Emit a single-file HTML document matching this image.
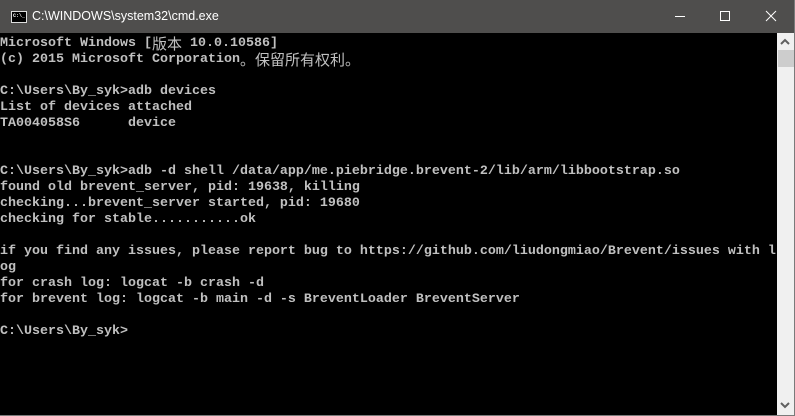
<!DOCTYPE html>
<html><head><meta charset="utf-8"><style>
html,body{margin:0;padding:0;background:#000;width:795px;height:416px;overflow:hidden}
.title{position:absolute;left:0;top:0;width:795px;height:33px;background:#4f4e4d}
.title .t{position:absolute;left:32px;top:9px;color:#fff;font:12.5px "Liberation Sans",sans-serif}
.icon{position:absolute;left:11px;top:11px;width:14px;height:10px;border:1px solid #ddd;background:#000}
.icon span{position:absolute;left:1px;top:1px;color:#fff;font:bold 5px "Liberation Mono",monospace;line-height:6px}
.term{position:absolute;left:0;top:36px;width:777px;height:378px;color:#c0c0c0;
font:bold 13.33px "Liberation Mono",monospace;line-height:16px;white-space:pre}
.l{display:block;height:16px;overflow:visible}
.c{display:inline-block;height:16px;vertical-align:top;font-family:"Noto Sans CJK SC",sans-serif;font-weight:normal;font-size:15px;line-height:16px}
.sb{position:absolute;left:777px;top:33px;width:17px;height:382px;background:#f0f0f0}
.thumb{position:absolute;left:1px;top:17px;width:16px;height:17px;background:#cdcdcd}
.border{position:absolute;left:0;top:415px;width:795px;height:1px;background:#7a7a7a}
.rb{position:absolute;left:794px;top:0;width:1px;height:416px;background:#7a7a7a}
</style></head><body>
<div class="title"><div class="icon"><span>C:\_</span></div><div class="t">C:\WINDOWS\system32\cmd.exe</div>
<svg style="position:absolute;left:670px;top:10px" width="120" height="14"><line x1="5" y1="6.5" x2="15" y2="6.5" stroke="#fff" stroke-width="1"/><rect x="50.5" y="1.5" width="9" height="9" fill="none" stroke="#fff"/><path d="M96 1L106 11M106 1L96 11" stroke="#fff" stroke-width="1"/></svg></div>
<div class="term"><span class="l">Microsoft Windows [<span class="c">版本</span> 10.0.10586]</span><span class="l">(c) 2015 Microsoft Corporation<span class="c">。保留所有权利。</span></span>
C:\Users\By_syk>adb devices
List of devices attached
TA004058S6      device


C:\Users\By_syk>adb -d shell /data/app/me.piebridge.brevent-2/lib/arm/libbootstrap.so
found old brevent_server, pid: 19638, killing
checking...brevent_server started, pid: 19680
checking for stable...........ok

if you find any issues, please report bug to https://github.com/liudongmiao/Brevent/issues with l
og
for crash log: logcat -b crash -d
for brevent log: logcat -b main -d -s BreventLoader BreventServer

C:\Users\By_syk></div>
<div class="sb"><div class="thumb"></div>
<svg style="position:absolute;left:3px;top:5px" width="10" height="8"><path d="M1 6L5 2L9 6" stroke="#606060" stroke-width="2" fill="none"/></svg>
<svg style="position:absolute;left:3px;top:368px" width="10" height="8"><path d="M1 2L5 6L9 2" stroke="#606060" stroke-width="2" fill="none"/></svg></div>
<div class="border"></div><div class="rb"></div>
</body></html>
